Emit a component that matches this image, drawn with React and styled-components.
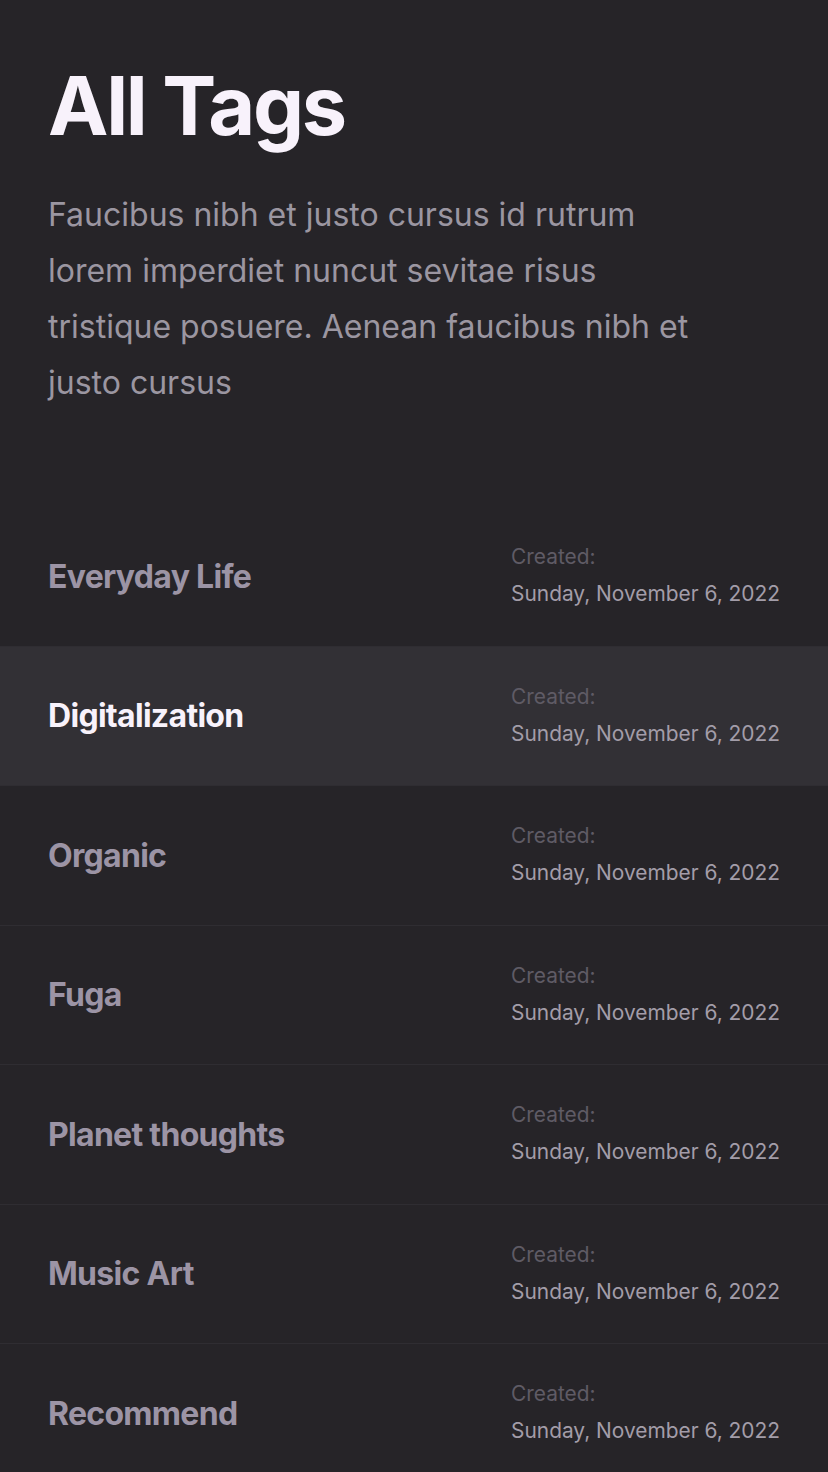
import React from "react";
import styled, { createGlobalStyle } from "styled-components";

const GlobalStyle = createGlobalStyle`
  html, body {
    margin: 0;
    padding: 0;
    background: #262428;
  }
  body {
    font-family: Inter, "Noto Sans", sans-serif;
    -webkit-font-smoothing: antialiased;
  }
`;

const Page = styled.div`
  background: #262428;
  min-height: 1472px;
  overflow: hidden;
`;

const Header = styled.header`
  padding: 56px 48px 0;
`;

const Title = styled.h1`
  margin: 0;
  font-size: 81px;
  line-height: 100px;
  font-weight: 700;
  letter-spacing: -2.3px;
  color: #f8f2fb;
`;

const Intro = styled.p`
  margin: 31px 0 0;
  max-width: 652px;
  font-size: 32px;
  line-height: 56px;
  color: #9b96a1;
`;

const TagList = styled.ul`
  list-style: none;
  margin: 96px 0 0;
  padding: 0;
`;

const TagRow = styled.li`
  display: flex;
  align-items: center;
  justify-content: space-between;
  height: 138.5px;
  padding: 0 48px;
  border-bottom: 1px solid #2f2d32;
  background: ${(p) => (p.$active ? "#323035" : "transparent")};
`;

const TagName = styled.span`
  font-size: 32px;
  font-weight: 700;
  letter-spacing: -0.7px;
  color: ${(p) => (p.$active ? "#f8f2fb" : "#9c94a5")};
`;

const Meta = styled.div`
  display: flex;
  flex-direction: column;
  gap: 8px;
  margin-top: -2px;
`;

const MetaLabel = styled.span`
  font-size: 20.9px;
  line-height: 29px;
  color: #5f5b65;
`;

const MetaDate = styled.span`
  font-size: 20.9px;
  line-height: 29px;
  color: #a39da9;
`;

const tags = [
  "Everyday Life",
  "Digitalization",
  "Organic",
  "Fuga",
  "Planet thoughts",
  "Music Art",
  "Recommend",
];

export default function App() {
  return (
    <Page>
      <GlobalStyle />
      <Header>
        <Title>All Tags</Title>
        <Intro>
          Faucibus nibh et justo cursus id rutrum lorem imperdiet nuncut
          sevitae risus tristique posuere. Aenean faucibus nibh et justo cursus
        </Intro>
      </Header>
      <TagList>
        {tags.map((tag, i) => (
          <TagRow key={tag} $active={i === 1}>
            <TagName $active={i === 1}>{tag}</TagName>
            <Meta>
              <MetaLabel>Created:</MetaLabel>
              <MetaDate>Sunday, November 6, 2022</MetaDate>
            </Meta>
          </TagRow>
        ))}
      </TagList>
    </Page>
  );
}
